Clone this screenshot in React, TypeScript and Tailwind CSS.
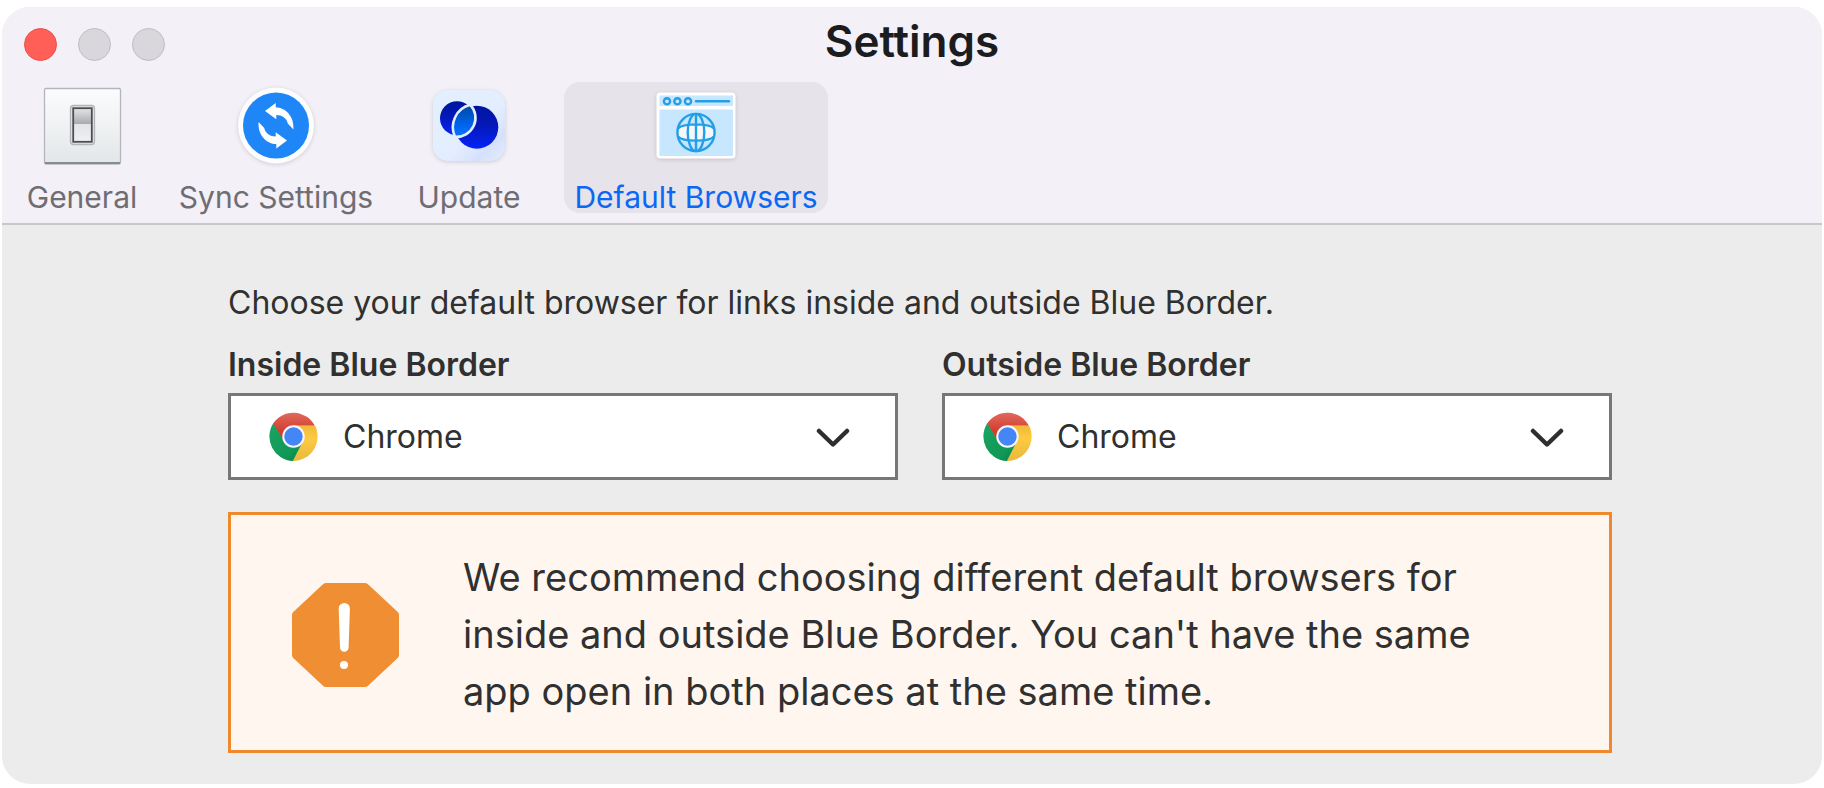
import React, { useState } from 'react';

const GeneralIcon = () => (
  <svg viewBox="0 0 80 80" className="size-20" aria-hidden="true">
    <defs>
      <linearGradient id="plate" x1="0" y1="0" x2="0" y2="1">
        <stop offset="0" stopColor="#fbfcfd" />
        <stop offset="1" stopColor="#e3e6e8" />
      </linearGradient>
      <linearGradient id="rocker" x1="0" y1="0" x2="0" y2="1">
        <stop offset="0" stopColor="#e3e4e6" />
        <stop offset="0.12" stopColor="#d4d6d8" />
        <stop offset="0.46" stopColor="#a9acaf" />
        <stop offset="0.47" stopColor="#e2e4e7" />
        <stop offset="1" stopColor="#eef0f3" />
      </linearGradient>
    </defs>
    <rect x="2.5" y="2.5" width="76" height="75.5" rx="1.5" fill="url(#plate)" stroke="#b4b5ba" strokeWidth="1.3" />
    <path d="M3 77h75" stroke="#878c91" strokeWidth="2" />
    <rect x="28.5" y="19.5" width="24" height="39" rx="3" fill="#e4e5e6" stroke="#b4b5b6" strokeWidth="1.3" />
    <rect x="31.2" y="22.2" width="18.6" height="33.6" fill="url(#rocker)" stroke="#4c4e50" strokeWidth="1.8" />
  </svg>
);

const SyncIcon = () => (
  <svg viewBox="0 0 80 80" className="size-20 drop-shadow-sm" aria-hidden="true">
    <circle cx="40" cy="39.5" r="38" fill="#fdfdfe" />
    <circle cx="40" cy="39.5" r="33" fill="#1f86f8" />
    <g fill="#fff">
      <path d="M29 25 39.7 17v4.3C49 21.5 58.5 30 57.4 43.5L51.8 37.5C50.5 32 46 29 40.3 29v4.2Z" />
      <path transform="rotate(180 40 39.7)" d="M29 25 39.7 17v4.3C49 21.5 58.5 30 57.4 43.5L51.8 37.5C50.5 32 46 29 40.3 29v4.2Z" />
    </g>
  </svg>
);

const UpdateIcon = () => (
  <svg viewBox="0 0 80 80" className="size-20 drop-shadow-sm" aria-hidden="true">
    <defs>
      <linearGradient id="tile" x1="0" y1="0" x2="1" y2="1">
        <stop offset="0" stopColor="#e3f0ff" />
        <stop offset="0.6" stopColor="#e3edfe" />
        <stop offset="0.8" stopColor="#d6e0fb" />
        <stop offset="1" stopColor="#e4edfd" />
      </linearGradient>
      <linearGradient id="disc" x1="0" y1="0" x2="0" y2="1">
        <stop offset="0" stopColor="#0014a0" />
        <stop offset="0.45" stopColor="#0418b8" />
        <stop offset="1" stopColor="#0524f8" />
      </linearGradient>
      <linearGradient id="lens" x1="0" y1="0" x2="0" y2="1">
        <stop offset="0" stopColor="#00489f" />
        <stop offset="0.65" stopColor="#0064f0" />
        <stop offset="1" stopColor="#0a74ff" />
      </linearGradient>
    </defs>
    <rect x="4" y="4" width="72" height="71" rx="15" fill="url(#tile)" />
    <circle cx="28" cy="32.3" r="17" fill="url(#disc)" />
    <circle cx="47.8" cy="41.2" r="21.5" fill="url(#disc)" />
    <path
      d="M41.3 18.8A19 19 0 0 1 26 50.8A23 23 0 0 1 41.3 18.8Z"
      fill="url(#lens)"
      stroke="#e3eefe"
      strokeWidth="2.6"
    />
  </svg>
);

const BrowserIcon = () => (
  <svg viewBox="0 0 80 80" className="size-20 drop-shadow-sm" aria-hidden="true">
    <rect x="0.5" y="6.5" width="79" height="66" rx="4" fill="#fff" />
    <path d="M3.5 9.5h73.5v10.5H3.5ZM3.5 23.5h73.5V70H3.5Z" fill="#c6e7fd" />
    <g stroke="#249fe6" strokeWidth="2.4" fill="none">
      <circle cx="11" cy="15.3" r="3.1" />
      <circle cx="21.4" cy="15.3" r="3.1" />
      <circle cx="32" cy="15.3" r="3.1" />
      <path d="M40 15.3h33" strokeLinecap="round" />
      <ellipse cx="40" cy="46.5" rx="18.5" ry="8.5" fill="#f6f7fa" stroke="none" />
      <circle cx="40" cy="46.5" r="18.6" />
      <ellipse cx="40" cy="46.5" rx="8.3" ry="18.6" />
      <path d="M40 28v37M22 42.5C27 37 53 37 58 42.5M22 50.5C27 56 53 56 58 50.5" />
    </g>
  </svg>
);

const ChromeIcon = () => (
  <svg viewBox="0 0 48 48" className="size-[49px]" aria-hidden="true">
    <defs>
      <linearGradient id="red" x1="0" y1="0" x2="0" y2="1">
        <stop offset="0" stopColor="#e06a5e" />
        <stop offset="0.6" stopColor="#d43d2e" />
      </linearGradient>
      <linearGradient id="yellow" x1="0" y1="0" x2="0" y2="1">
        <stop offset="0" stopColor="#f0b93a" />
        <stop offset="0.35" stopColor="#fdca42" />
        <stop offset="1" stopColor="#e8b93c" />
      </linearGradient>
      <linearGradient id="green" x1="0" y1="0" x2="1" y2="1">
        <stop offset="0" stopColor="#1ba362" />
        <stop offset="0.7" stopColor="#109856" />
        <stop offset="1" stopColor="#0b7a43" />
      </linearGradient>
    </defs>
    <path d="M24 24 14.8 30 3.8 11.5A24 24 0 0 1 45 13.5H24Z" fill="url(#red)" />
    <path d="M24 13.5H45.2A24 24 0 0 1 23.2 48L33 29Z" fill="url(#yellow)" />
    <path d="M4.2 11A24 24 0 0 0 23.4 48L33.2 29 24 34 14.8 29Z" fill="url(#green)" />
    <circle cx="24" cy="24" r="11" fill="#f4f6fa" />
    <circle cx="24" cy="24" r="9" fill="#4486f6" />
  </svg>
);

const tabs = [
  { name: 'General', icon: GeneralIcon, style: 'w-[124px] text-[#6f6d72]' },
  { name: 'Sync Settings', icon: SyncIcon, style: 'w-[216px] text-[#6f6d72]' },
  { name: 'Update', icon: UpdateIcon, style: 'w-[122px] text-[#6f6d72]' },
  { name: 'Default Browsers', icon: BrowserIcon, style: 'w-[264px] ml-[10px] bg-[#e6e3ea] text-[#0a68f5]' },
];

const BrowserSelect = ({ id, label }: { id: string; label: string }) => {
  const [value, setValue] = useState('Chrome');

  return (
    <div className="flex-1">
      <label htmlFor={id} className="block text-[32px] leading-9 font-semibold">{label}</label>
      <div className="relative mt-[10px]">
        <select
          id={id}
          value={value}
          onChange={(e) => setValue(e.target.value)}
          className="w-full h-[87px] appearance-none border-3 border-[#777777] bg-white pl-28 pr-20 text-[32px]"
        >
          <option>Chrome</option>
        </select>
        <span className="absolute inset-y-0 left-[41px] flex items-center pointer-events-none">
          <ChromeIcon />
        </span>
        <span className="absolute inset-y-0 right-12 flex items-center pointer-events-none">
          <svg viewBox="0 0 34 20" className="w-[34px] h-5" aria-hidden="true">
            <path d="M3 4l14 13.5L31 4" fill="none" stroke="#2f2f2f" strokeWidth="4.5" strokeLinecap="round" strokeLinejoin="round" />
          </svg>
        </span>
      </div>
    </div>
  );
};

const App = () => {
  return (
    <div className="bg-white px-0.5 pt-[7px] pb-1 font-['Inter',sans-serif] text-[#303030]">
      <div className="rounded-[28px] overflow-hidden bg-[#ececec]">
        <header className="bg-[#f3f0f8] border-b-2 border-[#c9c7cc]">
          <div className="grid grid-cols-[1fr_auto_1fr] items-center h-[75px] px-[22px]">
            <div className="flex gap-[21px]">
              <button aria-label="Close" className="size-[33px] rounded-full bg-[#ff5f57] border border-[#e9504a]" />
              <button aria-label="Minimize" className="size-[33px] rounded-full bg-[#d9d6dc] border border-[#bfbcc3]" />
              <button aria-label="Zoom" className="size-[33px] rounded-full bg-[#d9d6dc] border border-[#bfbcc3]" />
            </div>
            <h1 className="pb-2 text-[44px] leading-[52px] font-semibold text-[#1c1c1e]">Settings</h1>
          </div>
          <nav className="flex gap-6 pl-[18px] pb-[10px]">
            {tabs.map((tab) => (
              <button key={tab.name} className={`flex flex-col items-center pt-1 rounded-2xl whitespace-nowrap ${tab.style}`}>
                <tab.icon />
                <span className="mt-[15px] text-[30px] leading-8">{tab.name}</span>
              </button>
            ))}
          </nav>
        </header>

        <main className="pt-[54px] pb-[31px] pl-[226px] pr-[210px]">
          <p className="text-[32px] leading-[48px]">Choose your default browser for links inside and outside Blue Border.</p>
          <div className="flex gap-11 mt-5">
            <BrowserSelect id="inside" label="Inside Blue Border" />
            <BrowserSelect id="outside" label="Outside Blue Border" />
          </div>

          <div role="alert" className="flex items-center gap-16 mt-8 pt-[34px] pb-[30px] pl-[61px] pr-16 border-3 border-[#ee8a2c] bg-[#fff6f0]">
            <svg viewBox="0 0 107 104" className="w-[107px] h-[104px] shrink-0" aria-hidden="true">
              <path
                d="M34 4H73L103 32V72L73 100H34L4 72V32Z"
                fill="#ef8e32"
                stroke="#ef8e32"
                strokeWidth="8"
                strokeLinejoin="round"
              />
              <path d="M46.7 25.5a5.6 5.6 0 0 1 11.2 0L56.6 64.5a4.3 4.3 0 0 1-8.6 0Z" fill="#fff" />
              <circle cx="52" cy="82" r="4" fill="#fff" />
            </svg>
            <p className="text-[38px] leading-[57px]">
              We recommend choosing different default browsers for inside and outside Blue Border. You can't have the same app open in both places at the same time.
            </p>
          </div>
        </main>
      </div>
    </div>
  );
};

export default App;
